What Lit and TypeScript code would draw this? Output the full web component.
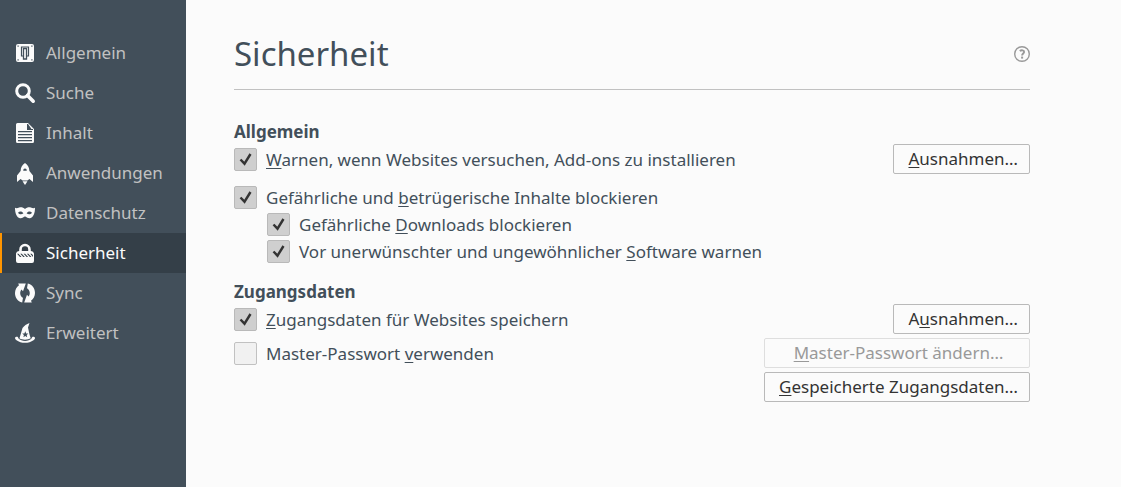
import { LitElement, html, svg, css, nothing, TemplateResult } from "lit";
import { customElement, property, state } from "lit/decorators.js";
import { classMap } from "lit/directives/class-map.js";

const icons: Record<string, TemplateResult> = {
  general: svg`<path fill-rule="evenodd" d="M3 1h14a2 2 0 0 1 2 2v14a2 2 0 0 1-2 2H3a2 2 0 0 1-2-2V3a2 2 0 0 1 2-2zM2.500 2.500v1.200h1.200V2.500zM16.300 2.500v1.200h1.200V2.500zM2.500 16.300v1.200h1.200v-1.200zM16.300 16.300v1.200h1.200v-1.200z"/><path d="M8 13H6.500V4h7v9H12" fill="none" stroke="#424f5a" stroke-width="1.200"/><path d="M8.500 5.500h3v10.500h-3z" stroke="#424f5a" stroke-width="1.300"/>`,
  search: svg`<circle cx="8" cy="8" r="6.300" fill="none" stroke="currentColor" stroke-width="3"/><path d="M12.500 12.500l5.700 5.700" fill="none" stroke="currentColor" stroke-width="3.600" stroke-linecap="round"/>`,
  content: svg`<path fill-rule="evenodd" d="M2.500 0H13l6 6v12.500a1.500 1.500 0 0 1-1.500 1.500h-15A1.500 1.500 0 0 1 1 18.500v-17A1.500 1.500 0 0 1 2.500 0zM12 1v6h6v-1h-1.500L13 1zM3 8v1.300h14V8zM3 11v1.300h14V11zM3 14v1.300h14V14zM3 17v1.200h14V17z"/>`,
  apps: svg`<path fill-rule="evenodd" d="M10 0C7.300 1.600 5.800 4.200 5.600 8L2 12.600V19l3.600-3 2 1.500h4.800l2-1.500 3.600 3v-6.400L14.400 8C14.200 4.200 12.700 1.600 10 0zM10 5.500a1.800 2.200 0 0 1 1.800 2.300H8.200A1.800 2.200 0 0 1 10 5.500z"/><path d="M7.600 18.300h4.800l-1 1.700-1.400 2-1.400-2z"/>`,
  privacy: svg`<path fill-rule="evenodd" d="M0 4.800c1.500.7 2.600.2 4.200-.3C6.500 4 8.500 4.700 10 6c1.500-1.300 3.500-2 5.800-1.500 1.600.5 2.700 1 4.200.3 0 5-1.300 9.700-5 10.400-2.300.4-3.700-1.700-5-1.700s-2.700 2.100-5 1.700C1.300 14.500 0 9.800 0 4.800zM3 9.800c1.500 2 4 2 5.400.4C7 8.300 4.700 7.800 3 9.800zM17 9.800c-1.500 2-4 2-5.400.4C13 8.300 15.300 7.800 17 9.800z"/>`,
  security: svg`<path d="M5.500 9V6.500a4.500 4.500 0 0 1 9 0V9" fill="none" stroke="currentColor" stroke-width="2.600"/><path fill-rule="evenodd" d="M4 8h12a3 3 0 0 1 3 2.500V18a2 2 0 0 1-2 2H3a2 2 0 0 1-2-2v-7.500A3 3 0 0 1 4 8zM2 10.700l3 3.400h1.500l-3-3.400zM5.300 10.700l3 3.400h1.500l-3-3.400zM8.600 10.700l3 3.400h1.500l-3-3.400zM11.900 10.700l3 3.400h1.500l-3-3.400zM15.200 10.700l2.800 3.200v-1.700l-1.300-1.500z"/>`,
  sync: svg`<path d="M3.200.5h7.600L8 8.200 6.500 6.400C4.300 9 5 13 8 14.800l-.8 4.700C2.600 18.400 0 14.500 0 10c0-3.200 1.600-6 4-7.800z"/><path d="M16.800 19.500H9.200L12 11.800l1.500 1.800C15.700 11 15 7 12 5.200l.8-4.700C17.400 1.600 20 5.500 20 10c0 3.200-1.600 6-4 7.800z"/>`,
  advanced: svg`<path fill-rule="evenodd" d="M14.500 0l-1.500 4.500 1.500 7 1.200 3.700C13 17 7.300 17.200 4.500 15.200L7.500 5c1.700-2.300 4-4 7-5zM10.300 8.300l-.9 2.100-2.200.2 1.700 1.400-.5 2.200 1.900-1.200 1.900 1.200-.5-2.200 1.700-1.400-2.200-.2z"/><path d="M1.200 13.800c1.300-.3 1.900-.1 2.300 1.700 3 3.300 10.300 3.200 13 0 .5-1.700 1.200-2 2.300-1.700 1.800.4 1.600 2.200-.3 3.500-4.500 3.400-12.600 3.400-17 0-1.800-1.300-2-3.100-.3-3.500z"/>`,
};

const categories = [
  ["general", "Allgemein"],
  ["search", "Suche"],
  ["content", "Inhalt"],
  ["apps", "Anwendungen"],
  ["privacy", "Datenschutz"],
  ["security", "Sicherheit"],
  ["sync", "Sync"],
  ["advanced", "Erweitert"],
];

/** Turns "_x" in a label into an underlined access key. */
function withAccessKey(text: string) {
  const at = text.indexOf("_");
  return at < 0
    ? text
    : html`${text.slice(0, at)}<u>${text[at + 1]}</u>${text.slice(at + 2)}`;
}

const accessKeyStyle = css`
  u {
    text-decoration-thickness: 1px;
    text-underline-offset: 2px;
    text-decoration-skip-ink: none;
  }
`;

@customElement("pref-checkbox")
class PrefCheckbox extends LitElement {
  @property() label = "";
  @property({ type: Boolean }) checked = false;

  static styles = [
    accessKeyStyle,
    css`
      :host {
        display: flex;
        line-height: 23px;
      }
      .label {
        display: flex;
        align-items: center;
        gap: 9px;
      }
      .control {
        display: grid;
        flex: none;
      }
      .box,
      .mark {
        grid-area: 1 / 1;
        width: 23px;
        height: 23px;
      }
      .box {
        appearance: none;
        box-sizing: border-box;
        margin: 0;
        border: 1px solid #c1c1c1;
        border-radius: 2px;
        background: #f1f1f1;
      }
      .box:checked {
        background: #cfcfcf;
        border-color: #b9b9b9;
      }
      .mark {
        pointer-events: none;
        fill: none;
        stroke: #333;
        stroke-width: 2.4;
      }
    `,
  ];

  private toggle(e: Event) {
    this.checked = (e.target as HTMLInputElement).checked;
  }

  render() {
    return html`<label class="label">
      <span class="control">
        <input class="box" type="checkbox" .checked=${this.checked} @change=${this.toggle} />
        ${this.checked
          ? html`<svg class="mark" viewBox="0 0 23 23" aria-hidden="true"><path d="M6.500 11.500l4 4.200L16.500 6" /></svg>`
          : nothing}
      </span>
      <span>${withAccessKey(this.label)}</span>
    </label>`;
  }
}

@customElement("app-root")
class AppRoot extends LitElement {
  @state() private selected = "security";

  static styles = [
    accessKeyStyle,
    css`
      :host {
        display: flex;
        min-height: 100vh;
        background: #fbfbfb;
        color: #424f5a;
        font: 17px/24px "Noto Sans", sans-serif;
      }
      .sidebar {
        flex: none;
        box-sizing: border-box;
        width: 186px;
        padding-top: 33px;
        background: #424f5a;
      }
      .category {
        display: flex;
        align-items: center;
        gap: 11px;
        box-sizing: border-box;
        height: 40px;
        padding-left: 13px;
        border-left: 2px solid transparent;
        color: #c1c1c1;
        text-decoration: none;
      }
      .category.selected {
        background: #343f48;
        border-color: #ff9500;
        color: #fbfbfb;
      }
      .icon {
        width: 20px;
        height: 20px;
        overflow: visible;
        color: #fbfbfb;
        fill: currentColor;
      }
      .main {
        flex: 1;
        min-width: 0;
        padding: 20px 48px;
      }
      .pane {
        max-width: 796px;
      }
      .header {
        display: flex;
        align-items: center;
        justify-content: space-between;
        height: 67px;
        padding-bottom: 2px;
        border-bottom: 1px solid #c1c1c1;
        margin-bottom: 30px;
      }
      .title {
        margin: 0;
        font-size: 33px;
        font-weight: 400;
        line-height: 46px;
      }
      .help {
        display: flex;
        padding: 0;
        border: 0;
        background: none;
        color: #999;
      }
      .help-icon {
        width: 16px;
        height: 16px;
      }
      .heading {
        margin: 0;
        font-size: 17px;
        font-weight: 700;
        line-height: 24px;
      }
      .group {
        margin-bottom: 17px;
      }
      .row {
        display: flex;
        align-items: center;
        justify-content: space-between;
      }
      .list {
        display: grid;
        gap: 4px;
        padding-top: 12px;
      }
      .nested {
        display: grid;
        gap: 4px;
        padding-left: 33px;
      }
      .credentials {
        display: grid;
        grid-template-columns: 1fr auto;
        align-items: center;
        gap: 4px;
      }
      .button {
        box-sizing: border-box;
        height: 30px;
        padding: 0 11px 0 14px;
        border: 1px solid #b9b9b9;
        border-radius: 2px;
        background: #fbfbfb;
        color: #333;
        font: inherit;
      }
      .button:disabled {
        border-color: #dedede;
        color: #999;
      }
      .end {
        justify-self: end;
      }
      .last {
        grid-column: 2;
      }
    `,
  ];

  render() {
    return html`
      <nav class="sidebar">
        ${categories.map(
          ([id, name]) => html`<a
            class=${classMap({ category: true, selected: id === this.selected })}
            href="#${id}"
            @click=${() => (this.selected = id)}
            ><svg class="icon" viewBox="0 0 20 20" aria-hidden="true">${icons[id]}</svg>${name}</a
          >`
        )}
      </nav>
      <main class="main">
        <div class="pane">
          <header class="header">
            <h1 class="title">Sicherheit</h1>
            <button class="help" aria-label="Hilfe">
              <svg class="help-icon" viewBox="0 0 16 16" fill="none" stroke="currentColor">
                <circle cx="8" cy="8" r="7.300" stroke-width="1.400" />
                <path d="M5.800 5.100C7.500 3.800 10.200 4.200 10.100 6c0 1.500-2 1.500-2 3.500" stroke-width="1.900" />
                <path d="M7.100 11.600h2" stroke-width="2" />
              </svg>
            </button>
          </header>
          <section class="group">
            <h2 class="heading">Allgemein</h2>
            <div class="row">
              <pref-checkbox checked label="_Warnen, wenn Websites versuchen, Add-ons zu installieren"></pref-checkbox>
              <button class="button">${withAccessKey("_Ausnahmen…")}</button>
            </div>
            <div class="list">
              <pref-checkbox checked label="Gefährliche und _betrügerische Inhalte blockieren"></pref-checkbox>
              <div class="nested">
                <pref-checkbox checked label="Gefährliche _Downloads blockieren"></pref-checkbox>
                <pref-checkbox checked label="Vor unerwünschter und ungewöhnlicher _Software warnen"></pref-checkbox>
              </div>
            </div>
          </section>
          <section>
            <h2 class="heading">Zugangsdaten</h2>
            <div class="credentials">
              <pref-checkbox checked label="_Zugangsdaten für Websites speichern"></pref-checkbox>
              <button class="button end">${withAccessKey("A_usnahmen…")}</button>
              <pref-checkbox label="Master-Passwort _verwenden"></pref-checkbox>
              <button class="button" disabled>${withAccessKey("_Master-Passwort ändern…")}</button>
              <button class="button last">${withAccessKey("_Gespeicherte Zugangsdaten…")}</button>
            </div>
          </section>
        </div>
      </main>
    `;
  }
}
